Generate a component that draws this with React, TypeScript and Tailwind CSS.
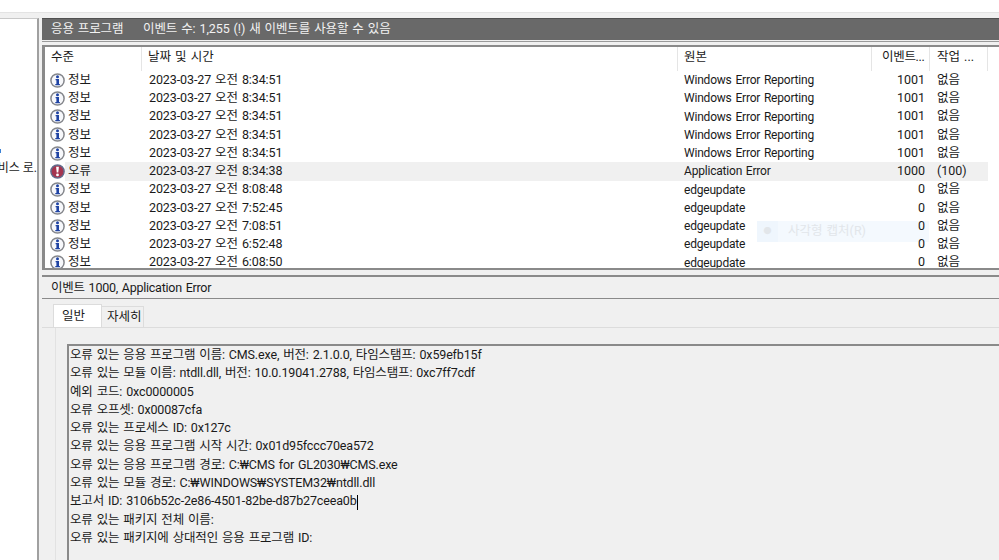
const font = { fontFamily: 'Roboto, "Noto Sans CJK KR", sans-serif' };

const rows = [
  ["정보", "2023-03-27 오전 8:34:51", "Windows Error Reporting", "1001", "없음"],
  ["정보", "2023-03-27 오전 8:34:51", "Windows Error Reporting", "1001", "없음"],
  ["정보", "2023-03-27 오전 8:34:51", "Windows Error Reporting", "1001", "없음"],
  ["정보", "2023-03-27 오전 8:34:51", "Windows Error Reporting", "1001", "없음"],
  ["정보", "2023-03-27 오전 8:34:51", "Windows Error Reporting", "1001", "없음"],
  ["오류", "2023-03-27 오전 8:34:38", "Application Error", "1000", "(100)"],
  ["정보", "2023-03-27 오전 8:08:48", "edgeupdate", "0", "없음"],
  ["정보", "2023-03-27 오전 7:52:45", "edgeupdate", "0", "없음"],
  ["정보", "2023-03-27 오전 7:08:51", "edgeupdate", "0", "없음"],
  ["정보", "2023-03-27 오전 6:52:48", "edgeupdate", "0", "없음"],
  ["정보", "2023-03-27 오전 6:08:50", "edgeupdate", "0", "없음"],
];

const details = [
  "오류 있는 응용 프로그램 이름: CMS.exe, 버전: 2.1.0.0, 타임스탬프: 0x59efb15f",
  "오류 있는 모듈 이름: ntdll.dll, 버전: 10.0.19041.2788, 타임스탬프: 0xc7ff7cdf",
  "예외 코드: 0xc0000005",
  "오류 오프셋: 0x00087cfa",
  "오류 있는 프로세스 ID: 0x127c",
  "오류 있는 응용 프로그램 시작 시간: 0x01d95fccc70ea572",
  "오류 있는 응용 프로그램 경로: C:₩CMS for GL2030₩CMS.exe",
  "오류 있는 모듈 경로: C:₩WINDOWS₩SYSTEM32₩ntdll.dll",
  "보고서 ID: 3106b52c-2e86-4501-82be-d87b27ceea0b",
  "오류 있는 패키지 전체 이름:",
  "오류 있는 패키지에 상대적인 응용 프로그램 ID:",
];

const InfoIcon = () => (
  <svg width="15" height="15" viewBox="0 0 15 15" className="shrink-0">
    <circle cx="7.5" cy="7.5" r="6.6" fill="#f7f8fb" stroke="#85878c" strokeWidth="1.5" />
    <circle cx="7.5" cy="3.8" r="1.5" fill="#1f43a3" />
    <path d="M5.6 5.9h3.4v5h.9v1.4H5.3v-1.4h1.1V7.2h-.8z" fill="#1f43a3" />
  </svg>
);

const ErrorIcon = () => (
  <svg width="15" height="15" viewBox="0 0 15 15" className="shrink-0">
    <circle cx="7.5" cy="7.5" r="6.6" fill="#a5344f" stroke="#626c8c" strokeWidth="1.5" />
    <path d="M6.1 2.8h2.8l-.6 5.8H6.7z" fill="#fff" />
    <circle cx="7.5" cy="10.9" r="1.4" fill="#fff" />
  </svg>
);

const App = () => {
  return (
    <div className="w-[999px] h-[560px] flex flex-col overflow-hidden bg-[#f0f0f0] text-[12.5px] text-[#1a1a1a] [word-spacing:1px]" style={font}>
      <div className="h-3 shrink-0 bg-white border-b border-[#e3e3e3] box-content" />
      <div className="flex flex-1 min-h-0 pt-[5px]">
        {/* Left tree */}
        <div className="w-[39px] shrink-0 bg-white border-t border-r-2 border-[#a0a0a0] border-t-[#c8c8c8] relative">
          <div className="absolute left-0 top-[130px] w-[1px] h-1 bg-[#3b82d6]" />
          <div className="mt-[140px] flex justify-end leading-[18px]">
            <span className="whitespace-nowrap text-[12px] [word-spacing:0]">비스 로.</span>
          </div>
        </div>

        {/* Main */}
        <div className="flex-1 min-w-0 ml-[3px] flex flex-col">
          <div className="h-[22px] shrink-0 bg-[#696969] text-[#f2f2f2] flex items-center pl-[9px] border-t border-[#505050] tracking-[-0.1px]">
            <span className="w-[92px]">응용 프로그램</span>
            <span>이벤트 수: 1,255 (!) 새 이벤트를 사용할 수 있음</span>
          </div>
          <div className="h-[4px] shrink-0 mt-[1px] border-t border-[#9a9a9a]" />

          <div className="h-[225px] shrink-0 border-t-2 border-b-2 border-l-[3px] border-[#8a8a8a] bg-white overflow-hidden relative flex flex-col">
            {/* faded capture menu left over in the screenshot */}
            <div className="absolute left-[712px] top-[174px] w-[172px] h-[21px] bg-[#f4f9fe] flex items-center text-[#e2e6ea]">
              <span className="w-[21px] h-full flex items-center justify-center bg-[#eff6fd] text-[8px]">●</span>
              <span className="pl-[10px]">사각형 캡처(R)</span>
            </div>
            <div className="h-[24px] shrink-0 flex items-center">
              <div className="w-[97px] pl-[6px] pb-[3px] h-full flex items-center border-r border-[#e5e5e5]">수준</div>
              <div className="w-[536px] pl-[6px] pb-[3px] h-full flex items-center border-r border-[#e5e5e5]">날짜 및 시간</div>
              <div className="w-[194px] pl-[6px] pb-[3px] h-full flex items-center border-r border-[#e5e5e5]">원본</div>
              <div className="w-[58px] pl-[10px] pb-[3px] h-full flex items-center border-r border-[#e5e5e5] tracking-[-0.3px]">이벤트...</div>
              <div className="w-[58px] pl-[7px] pb-[3px] h-full flex items-center border-r border-[#e5e5e5]">작업 ...</div>
            </div>
            {rows.map((r, i) => {
              const selected = r[0] === "오류";
              return (
                <div key={i} className="relative h-[18.25px] shrink-0 flex items-center leading-none whitespace-nowrap">
                  <div className="w-[97px] pl-[5px] h-full flex items-center shrink-0">
                    {selected ? <ErrorIcon /> : <InfoIcon />}
                    <span className={`pl-[3px] h-full flex items-center ${selected ? "bg-[#f0f0f0] w-[77px]" : ""}`}>{r[0]}</span>
                  </div>
                  <div className={`w-[536px] pl-[7px] h-full flex items-center shrink-0 tracking-[-0.1px] ${selected ? "bg-[#f0f0f0]" : ""}`}>{r[1]}</div>
                  <div className={`w-[194px] pl-[6px] h-full flex items-center shrink-0 text-[12px] tracking-[-0.2px] ${selected ? "bg-[#f0f0f0]" : ""}`}>{r[2]}</div>
                  <div className={`w-[53px] h-full flex items-center justify-end shrink-0 ${selected ? "bg-[#f0f0f0]" : ""}`}>{r[3]}</div>
                  <div className={`w-[63px] pl-[12px] h-full flex items-center shrink-0 ${selected ? "bg-[#f0f0f0]" : ""}`}>{r[4]}</div>
                </div>
              );
            })}
          </div>

          {/* Detail panel */}
          <div className="h-[5px] shrink-0 border-b-2 border-[#8a8a8a] box-content" />
          <div className="flex-1 min-h-0 flex flex-col">
            <div className="h-[22px] shrink-0 pl-[9px] pt-[1px] flex items-center border-b border-[#8a8a8a] tracking-[-0.25px]">이벤트 1000, Application Error</div>
            <div className="h-[28px] shrink-0 flex pl-[11px] items-end border-b border-[#dcdcdc] box-content">
              <div className="w-[49px] h-[23px] bg-white border border-b-0 border-[#dcdcdc] flex items-center pl-[8px]">일반</div>
              <div className="w-[43px] ml-[-1px] h-[21px] bg-[#f0f0f0] border border-b-0 border-[#dcdcdc] flex items-center pl-[5px] [word-spacing:0]">자세히</div>
            </div>
            <div className="flex-1 min-h-0 ml-[13px] pl-[11px] pt-[16px] border-l border-[#e2e2e2]">
              <div className="h-full border-t-2 border-l-2 border-[#8a8a8a] pl-[1px] whitespace-nowrap overflow-hidden tracking-[-0.15px]">
                {details.map((d, i) => (
                  <div key={i} className="h-[18.3px] leading-[18.3px]">
                    {d}
                    {i === 8 && <span className="inline-block w-[1px] h-[15px] bg-black align-middle" />}
                  </div>
                ))}
              </div>
            </div>
          </div>
        </div>
      </div>
    </div>
  );
};

export default App;
